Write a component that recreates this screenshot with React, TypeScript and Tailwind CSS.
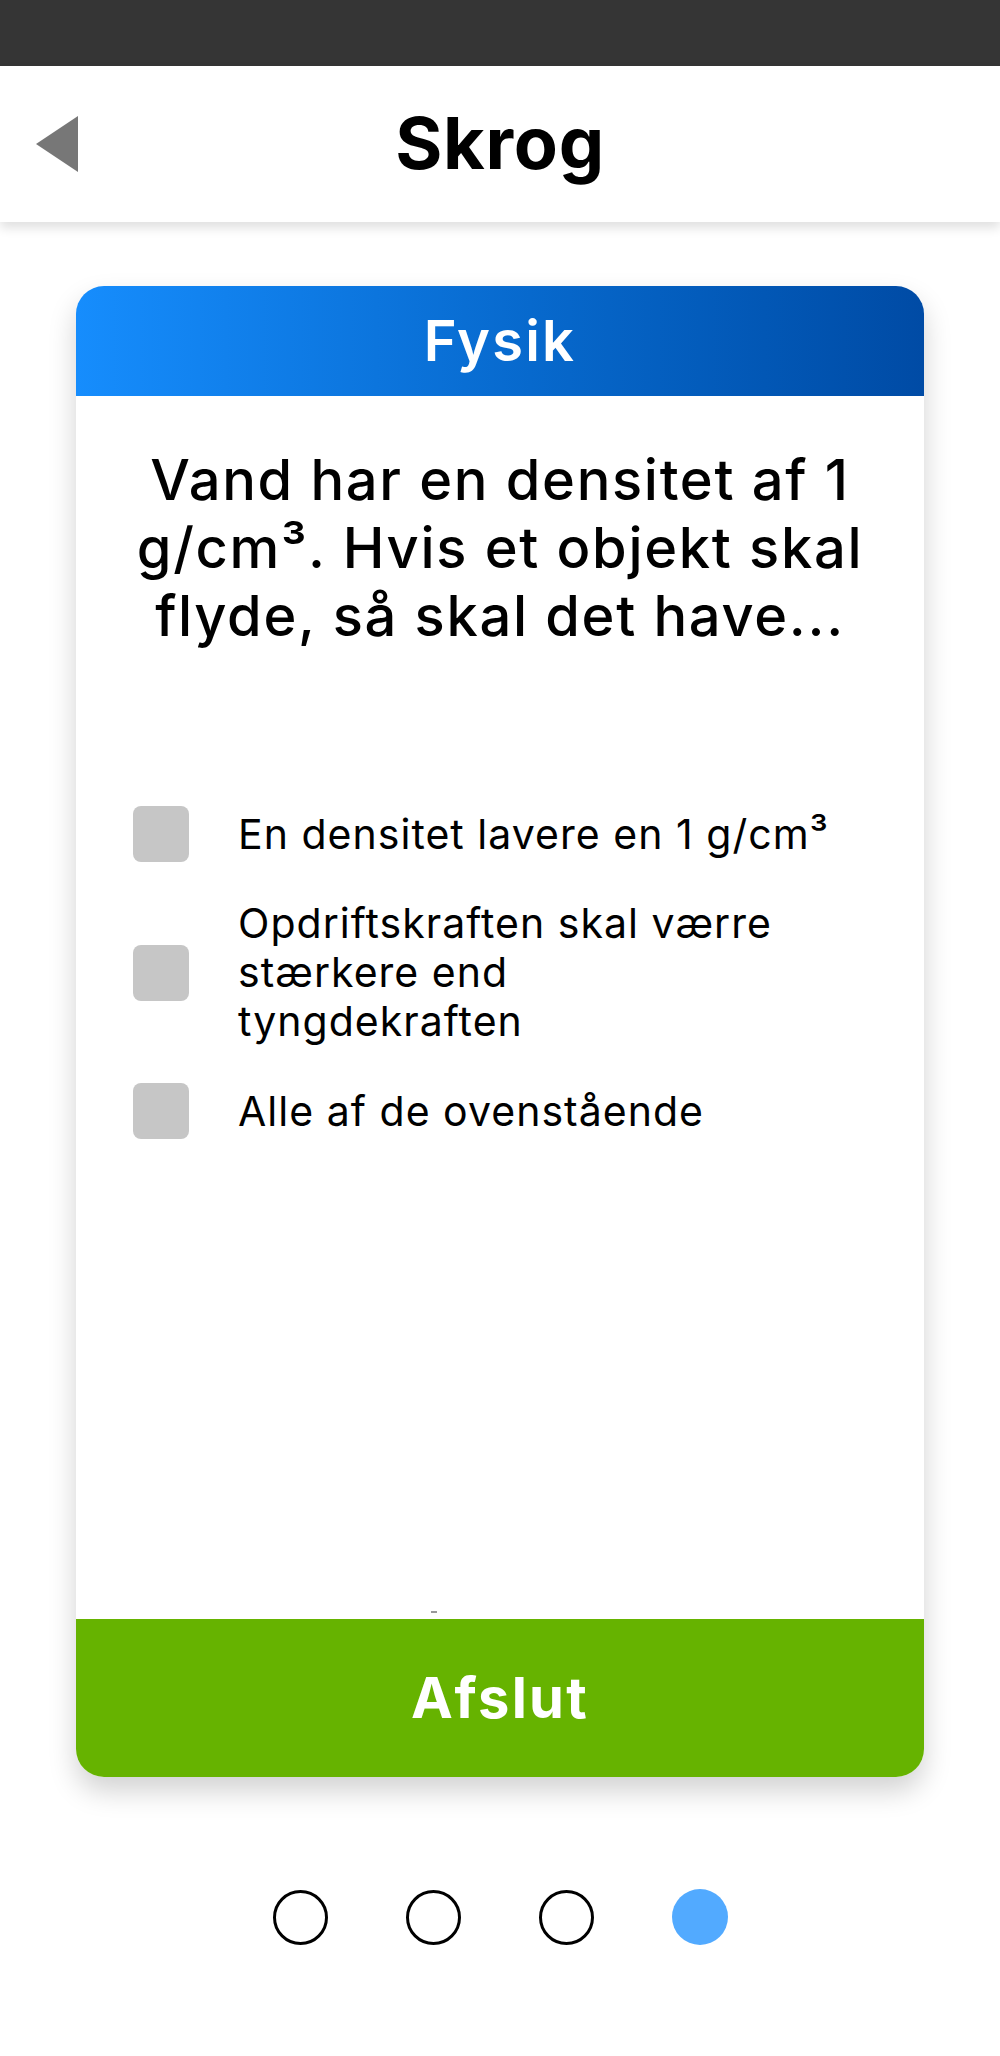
export default function App() {
  const options = [
    ['En densitet lavere en 1 g/cm³'],
    ['Opdriftskraften skal værre', 'stærkere end', 'tyngdekraften'],
    ['Alle af de ovenstående'],
  ];

  return (
    <div className="w-[1000px] min-h-[2056px] bg-white font-['Inter',sans-serif] text-black">
      <div className="h-[66px] bg-[#353535]" />

      <header className="relative z-10 h-[156px] bg-white flex items-center px-[36px] shadow-[0_6px_10px_rgba(0,0,0,0.12)]">
        <svg width="42" height="56" viewBox="0 0 42 56" className="shrink-0">
          <polygon points="42,0 42,56 0,28" fill="#777777" />
        </svg>
        <h1 className="flex-1 text-center text-[72px] font-bold leading-none tracking-[0.01em] -mt-[2px]">Skrog</h1>
        <div className="w-[42px] shrink-0" />
      </header>

      <main className="pt-[64px] flex flex-col items-center">
        <div className="w-[848px] rounded-[28px] bg-white shadow-[0_14px_28px_rgba(0,0,0,0.18)]">
          <div className="h-[110px] rounded-t-[28px] bg-gradient-to-r from-[#168dfd] to-[#004ba5] flex items-center justify-center">
            <span className="text-white text-[56px] font-semibold leading-none tracking-[0.04em]">Fysik</span>
          </div>

          <div className="h-[1223px] flex flex-col">
            <p className="px-[50px] pt-[50px] text-center text-[56px] font-medium leading-[68px] tracking-[0.03em]">
              Vand har en densitet af 1 g/cm³. Hvis et objekt skal flyde, så skal det have...
            </p>

            <ul className="mt-[156px] flex flex-col gap-[37px] pl-[57px]">
              {options.map((o) => (
                <li key={o[0]} className="flex items-center gap-[49px]">
                  <span className="w-[56px] h-[56px] rounded-[8px] bg-[#c6c6c6] shrink-0" />
                  <span className="flex flex-col text-[41px] leading-[49px] tracking-[0.025em]">
                    {o.map((line) => (
                      <span key={line} className="whitespace-nowrap">{line}</span>
                    ))}
                  </span>
                </li>
              ))}
            </ul>

            <div className="mt-auto mb-[6px] ml-[355px] w-[6px] h-[2px] bg-[#999]" />
          </div>

          <button className="w-full h-[158px] rounded-b-[28px] bg-[#66b300] text-white text-[56px] font-bold tracking-[0.04em] flex items-center justify-center">
            Afslut
          </button>
        </div>

        <div className="mt-[112px] flex items-center gap-[78px]">
          {[0, 1, 2, 3].map((i) =>
            i === 3 ? (
              <span key={i} className="w-[56px] h-[56px] rounded-full bg-[#52aaff]" />
            ) : (
              <span key={i} className="w-[55px] h-[55px] rounded-full border-[3px] border-black" />
            ),
          )}
        </div>
      </main>
    </div>
  );
}
